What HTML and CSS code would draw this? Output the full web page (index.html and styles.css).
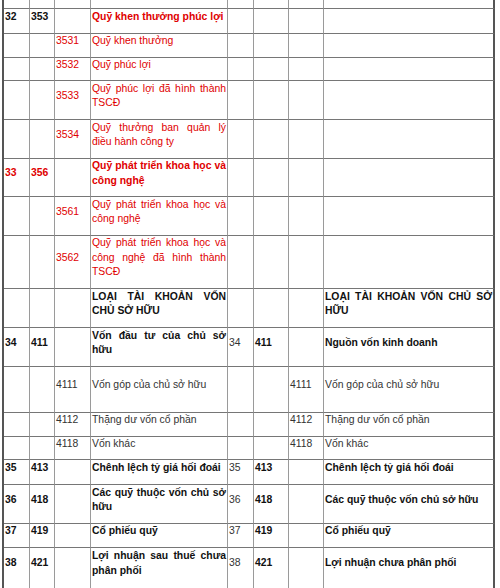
FILE: index.html
```html
<!DOCTYPE html>
<html lang="vi">
<head>
<meta charset="utf-8">
<title>Hệ thống tài khoản</title>
<link rel="stylesheet" href="styles.css">
</head>
<body>
<table class="sheet">
  <colgroup>
    <col class="c1"><col class="c2"><col class="c3"><col class="c4">
    <col class="c5"><col class="c6"><col class="c7"><col class="c8">
  </colgroup>
  <tbody>
    <tr class="h8"><td></td><td></td><td></td><td></td><td></td><td></td><td></td><td class="end"></td></tr>
    <tr class="h25"><td class="b">32</td><td class="b">353</td><td></td><td class="j b r">Quỹ khen thưởng phúc lợi</td><td></td><td></td><td></td><td class="end"></td></tr>
    <tr class="h23"><td></td><td></td><td class="r">3531</td><td class="j r">Quỹ khen thưởng</td><td></td><td></td><td></td><td class="end"></td></tr>
    <tr class="h23"><td></td><td></td><td class="r">3532</td><td class="j r">Quỹ phúc lợi</td><td></td><td></td><td></td><td class="end"></td></tr>
    <tr class="h39"><td></td><td></td><td class="r">3533</td><td class="j r">Quỹ phúc lợi đã hình thành TSCĐ</td><td></td><td></td><td></td><td class="end"></td></tr>
    <tr class="h39"><td></td><td></td><td class="r">3534</td><td class="j r">Quỹ thưởng ban quản lý điều hành công ty</td><td></td><td></td><td></td><td class="end"></td></tr>
    <tr class="h38"><td class="b r">33</td><td class="b r">356</td><td></td><td class="j b r">Quỹ phát triển khoa học và công nghệ</td><td></td><td></td><td></td><td class="end"></td></tr>
    <tr class="h39"><td></td><td></td><td class="r">3561</td><td class="j r">Quỹ phát triển khoa học và công nghệ</td><td></td><td></td><td></td><td class="end"></td></tr>
    <tr class="h53"><td></td><td></td><td class="r">3562</td><td class="j r">Quỹ phát triển khoa học và công nghệ đã hình thành TSCĐ</td><td></td><td></td><td></td><td class="end"></td></tr>
    <tr class="h39"><td></td><td></td><td></td><td class="j b">LOẠI TÀI KHOẢN VỐN CHỦ SỞ HỮU</td><td></td><td></td><td></td><td class="j b end">LOẠI TÀI KHOẢN VỐN CHỦ SỞ HỮU</td></tr>
    <tr class="h39"><td class="b">34</td><td class="b">411</td><td></td><td class="j b">Vốn đầu tư của chủ sở hữu</td><td>34</td><td class="b">411</td><td></td><td class="j b end">Nguồn vốn kinh doanh</td></tr>
    <tr class="h46"><td></td><td></td><td>4111</td><td class="j">Vốn góp của chủ sở hữu</td><td></td><td></td><td>4111</td><td class="j end">Vốn góp của chủ sở hữu</td></tr>
    <tr class="h23"><td></td><td></td><td>4112</td><td class="j">Thặng dư vốn cổ phần</td><td></td><td></td><td>4112</td><td class="j end">Thặng dư vốn cổ phần</td></tr>
    <tr class="h22"><td></td><td></td><td>4118</td><td class="j">Vốn khác</td><td></td><td></td><td>4118</td><td class="j end">Vốn khác</td></tr>
    <tr class="h25"><td class="b">35</td><td class="b">413</td><td></td><td class="j b">Chênh lệch tỷ giá hối đoái</td><td>35</td><td class="b">413</td><td></td><td class="j b end">Chênh lệch tỷ giá hối đoái</td></tr>
    <tr class="h39"><td class="b">36</td><td class="b">418</td><td></td><td class="j b">Các quỹ thuộc vốn chủ sở hữu</td><td>36</td><td class="b">418</td><td></td><td class="j b end">Các quỹ thuộc vốn chủ sở hữu</td></tr>
    <tr class="h23"><td class="b">37</td><td class="b">419</td><td></td><td class="j b">Cổ phiếu quỹ</td><td>37</td><td class="b">419</td><td></td><td class="j b end">Cổ phiếu quỹ</td></tr>
    <tr class="h41"><td class="b">38</td><td class="b">421</td><td></td><td class="j b">Lợi nhuận sau thuế chưa phân phối</td><td>38</td><td class="b">421</td><td></td><td class="j b end">Lợi nhuận chưa phân phối</td></tr>
    <tr class="h39"><td></td><td></td><td>4211</td><td class="j">Lợi nhuận sau thuế chưa phân phối năm trước</td><td></td><td></td><td>4211</td><td class="j end">Lợi nhuận chưa phân phối năm trước</td></tr>
  </tbody>
</table>
</body>
</html>
```
FILE: styles.css
```css
html, body {
  margin: 0;
  padding: 0;
  overflow: hidden;
  background: #fff;
}

.sheet {
  border-collapse: separate;
  border-spacing: 0;
  table-layout: fixed;
  width: 493px;
  margin-left: 2px;
  border-left: 2px solid #555;
  font-family: "Liberation Sans", Arial, sans-serif;
  font-size: 10.4px;
  line-height: 14.5px;
  color: #333;
}

.c1 { width: 26px; }
.c2 { width: 25px; }
.c3 { width: 36px; }
.c4 { width: 137px; }
.c5 { width: 26px; }
.c6 { width: 35px; }
.c7 { width: 35px; }
.c8 { width: 171px; }

.sheet td {
  box-sizing: border-box;
  padding: 0 1px 8px 1px;
  border-right: 1px solid #9a9a9a;
  border-bottom: 1px solid #767676;
  vertical-align: middle;
  text-align: left;
  overflow: hidden;
}

.sheet td.end {
  border-right: 2px solid #555;
}

.sheet td.j { text-align: justify; }
.sheet td.b { font-weight: bold; color: #111; }
.sheet td.r { color: #e00000; }

.h8 { height: 8px; }
.h22 { height: 22px; }
.h23 { height: 23px; }
.h25 { height: 25px; }
.h38 { height: 38px; }
.h39 { height: 39px; }
.h41 { height: 41px; }
.h46 { height: 46px; }
.h53 { height: 53px; }
```
